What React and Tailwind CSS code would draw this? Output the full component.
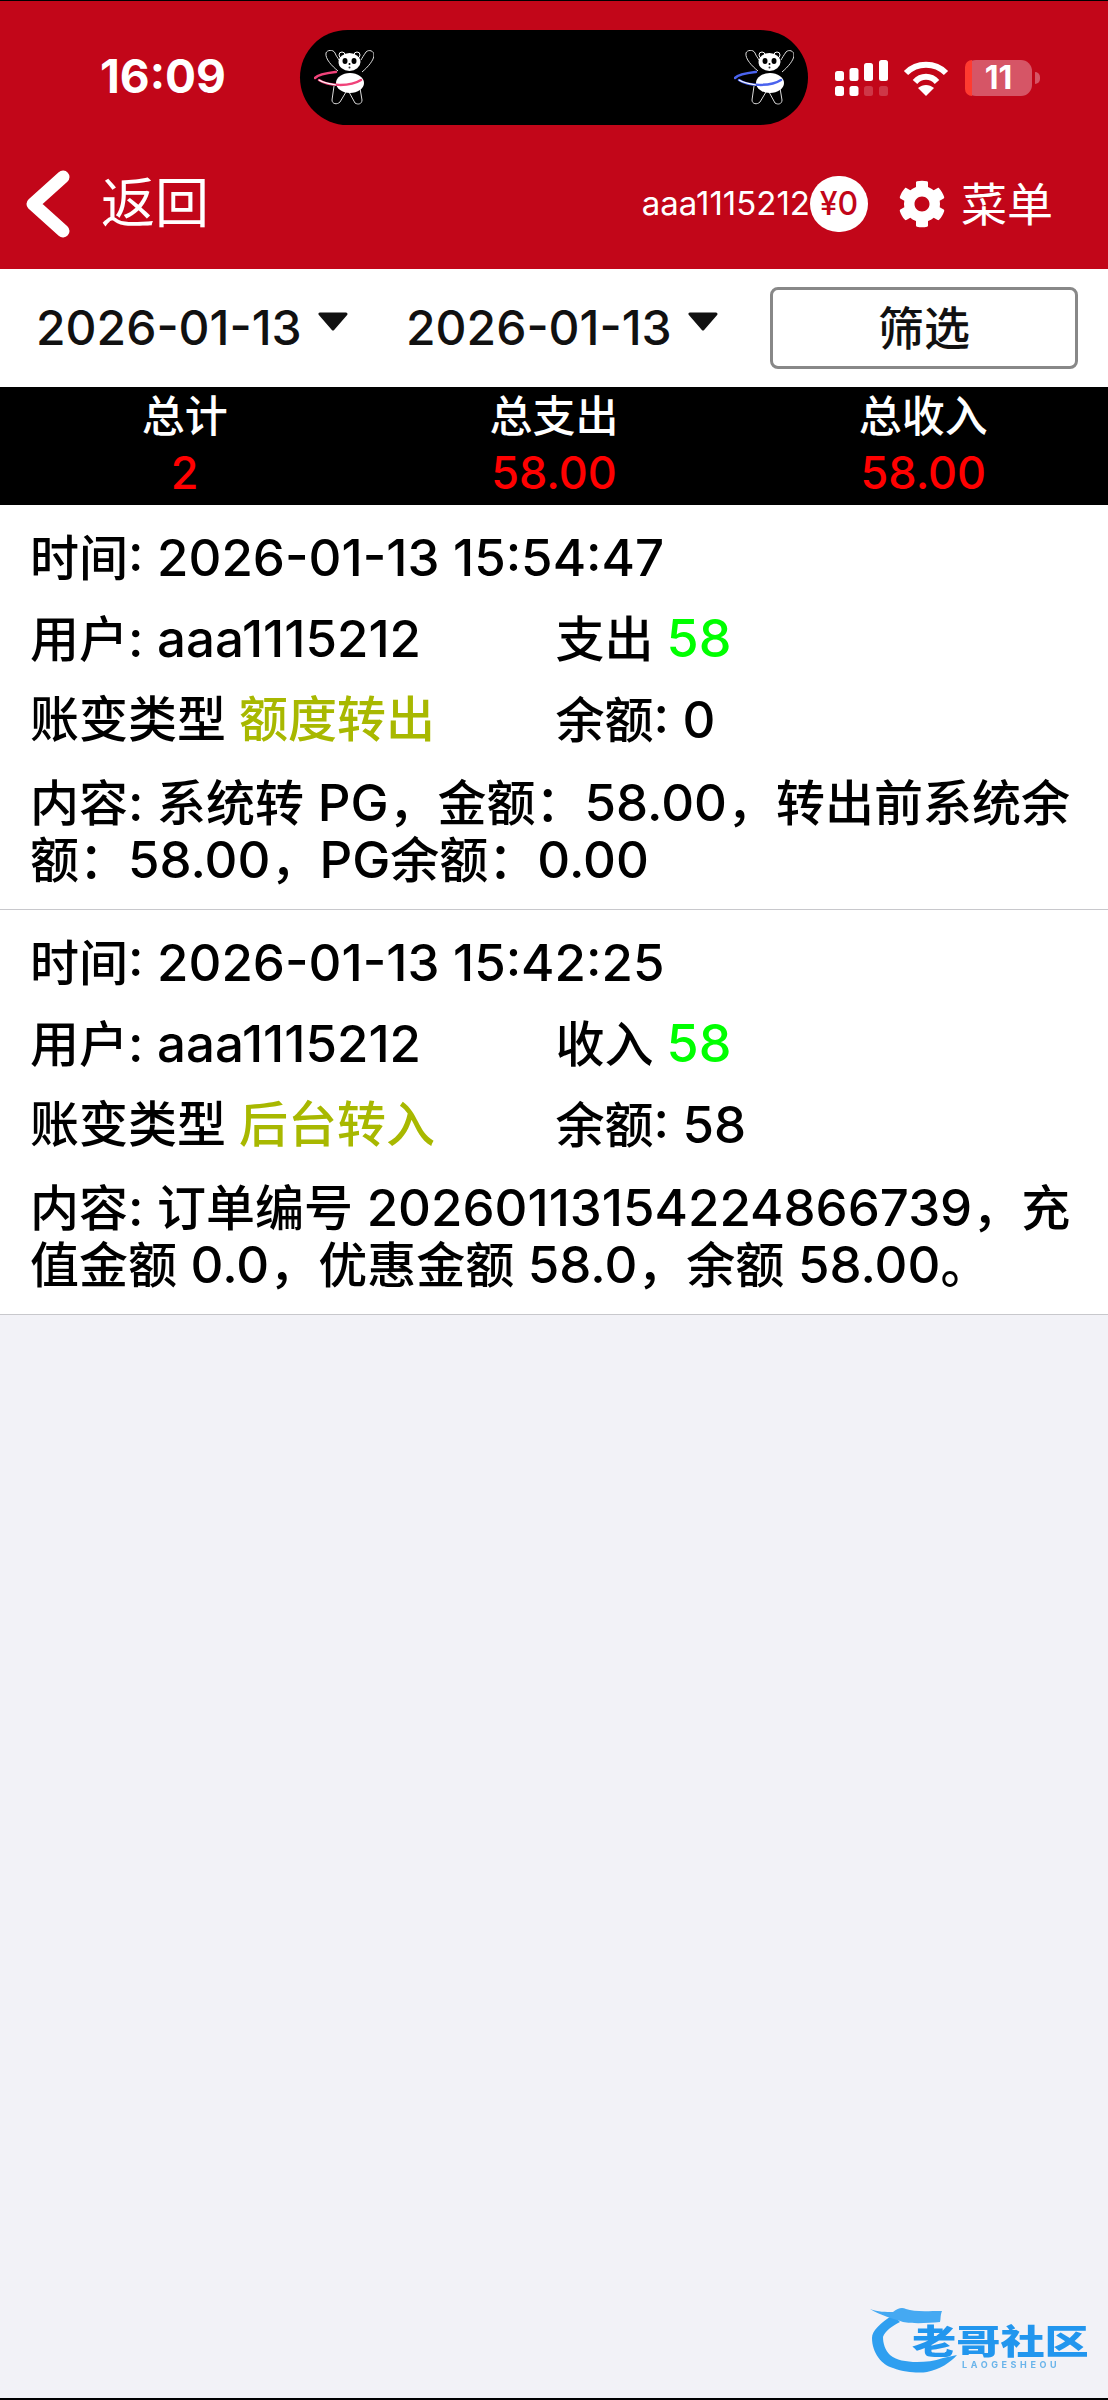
import React from 'react';
import { FaCog } from 'react-icons/fa';

const records = [
  {
    time: '2026-01-13 15:54:47',
    user: 'aaa1115212',
    flowLabel: '支出',
    amount: '58',
    type: '额度转出',
    balance: '0',
    content: ['内容: 系统转 PG，金额：58.00，转出前系统余', '额：58.00，PG余额：0.00'],
  },
  {
    time: '2026-01-13 15:42:25',
    user: 'aaa1115212',
    flowLabel: '收入',
    amount: '58',
    type: '后台转入',
    balance: '58',
    content: ['内容: 订单编号 20260113154224866739，充', '值金额 0.0，优惠金额 58.0，余额 58.00。'],
  },
];

// digits and latin run a bit larger than the CJK text in the original
const Mixed = ({ text }) =>
  text.split(/([\x20-\x7e]+)/).map((part, i) =>
    i % 2 === 1 ? (
      <span key={i} className="text-[51px]">{part}</span>
    ) : (
      part
    )
  );

const Panda = ({ hoop }) => (
  <svg width="60" height="56" viewBox="0 0 60 56" fill="none">
    <path d="M24 21C18 16 11 9 12 3C13 0 19 -1 21 3C22 6 24 8 25 10" stroke="#ddd" strokeWidth="1" />
    <path d="M48 22C54 17 60 10 60 5C60 1 55 -1 52 2C50 5 48 8 47 10" stroke="#ddd" strokeWidth="1" />
    <path d="M20 36L18 50C18 54 23 55 26 52L32 42" stroke="#ddd" strokeWidth="1" />
    <path d="M35 42L41 53C44 55 48 54 48 50L46 38" stroke="#ddd" strokeWidth="1" />
    <circle cx="28" cy="5" r="3" fill="#000" stroke="#fff" strokeWidth="1" />
    <circle cx="43" cy="5" r="3" fill="#000" stroke="#fff" strokeWidth="1" />
    <ellipse cx="35.5" cy="12" rx="11" ry="9" fill="#fff" />
    <ellipse cx="31" cy="11" rx="2.5" ry="3" fill="#000" />
    <ellipse cx="40" cy="11" rx="2.5" ry="3" fill="#000" />
    <circle cx="35.5" cy="14" r="1" fill="#000" />
    <circle cx="35.5" cy="17.5" r="1" fill="#333" />
    <ellipse cx="36" cy="33" rx="14" ry="10" fill="#fff" />
    <path d="M1 28C5 24 14 23 22 22" stroke={hoop} strokeWidth="2.5" strokeLinecap="round" />
    <path d="M5 30C14 36 36 37 47 30" stroke={hoop} strokeWidth="2.5" strokeLinecap="round" />
    <path d="M5 30C10 33 16 34 22 35" stroke="#fff" strokeWidth="1.2" />
  </svg>
);

const SignalIcon = () => (
  <svg width="53" height="36" viewBox="0 0 53 36" fill="#fff">
    <rect x="0" y="11" width="9" height="10" rx="2.5" />
    <rect x="14.5" y="8" width="9" height="13" rx="2.5" />
    <rect x="29" y="3" width="9" height="18" rx="2.5" />
    <rect x="44" y="0" width="9" height="21" rx="2.5" />
    <rect x="0" y="26" width="9" height="10" rx="2.5" />
    <rect x="14.5" y="26" width="9" height="10" rx="2.5" />
    <rect x="29" y="26" width="9" height="10" rx="2.5" opacity="0.2" />
    <rect x="44" y="26" width="9" height="10" rx="2.5" opacity="0.2" />
  </svg>
);

const WifiIcon = () => (
  <svg width="46" height="36" viewBox="0 0 46 36" fill="none" stroke="#fff" strokeWidth="6">
    <path d="M3 13C14 2 32 2 43 13" />
    <path d="M12 22C18 15 28 15 34 22" />
    <path d="M23 36L15 28C20 24 26 24 31 28Z" fill="#fff" stroke="none" />
  </svg>
);

const Battery = () => (
  <div className="flex items-center gap-[3px]">
    <div className="w-[67px] h-[36px] rounded-[11px] bg-[#d65566] flex items-center">
      <div className="w-[7px] h-full rounded-l-[11px] bg-[#ff3b30]" />
      <span className="w-[53px] text-center text-[32px] leading-none font-bold text-white">11</span>
    </div>
    <div className="w-[5px] h-[12px] rounded-r-full bg-[#d65566]" />
  </div>
);

const CaretDown = () => (
  <svg width="32" height="19" viewBox="0 0 32 19" className="ml-[15px] mt-[-14px]">
    <path d="M3 2H29L16 17Z" fill="#111" stroke="#111" strokeWidth="3" strokeLinejoin="round" />
  </svg>
);

const DateSelect = ({ value, className }) => (
  <div className={`flex items-center ${className}`}>
    <span className="text-[48px] leading-none font-medium text-[#111]">{value}</span>
    <CaretDown />
  </div>
);

const Stat = ({ label, value }) => (
  <div className="flex flex-col items-center pt-[2px] font-medium">
    <span className="text-[43px] leading-[55px] text-white">{label}</span>
    <span className="text-[45px] leading-[57px] text-[#ff0000]">{value}</span>
  </div>
);

const RecordRow = ({ record }) => (
  <div className="bg-white border-b border-[#c8c8cc] pl-[30px] pr-[31px] pt-[12px] pb-[21px] text-[49px] font-medium text-black">
    <div className="h-[81px] leading-[81px]">
      <Mixed text={`时间: ${record.time}`} />
    </div>
    <div className="grid grid-cols-2 h-[81px] leading-[81px]">
      <div>
        <Mixed text={`用户: ${record.user}`} />
      </div>
      <div className="pl-[2px]">
        {record.flowLabel} <span className="text-[52px] text-[#00ff00]">{record.amount}</span>
      </div>
    </div>
    <div className="grid grid-cols-2 h-[81px] leading-[81px]">
      <div>
        账变类型 <span className="text-[#a8b800]">{record.type}</span>
      </div>
      <div className="pl-[2px]">
        <Mixed text={`余额: ${record.balance}`} />
      </div>
    </div>
    <div className="pt-[14px]">
      {record.content.map((line) => (
        <div key={line} className="h-[57px] leading-[57px] whitespace-nowrap">
          <Mixed text={line} />
        </div>
      ))}
    </div>
  </div>
);

const Watermark = () => (
  <div className="absolute left-[870px] top-[2303px] w-[222px] h-[70px] blur-[0.7px]">
    <svg width="100" height="72" viewBox="0 0 100 72" className="absolute left-0 top-0">
      <path d="M23 12C10 20 2 28 2 35C2 50 12 62 23 65C36 70 50 70 57 69C70 66 80 60 87 52L73 55C64 58 56 59 47 59C36 59 26 57 20 52C15 47 13 40 13 34C15 28 22 23 30 19Z" fill="#2f9ff0" />
      <path d="M0 6C8 9 16 9 23 9C28 5 32 4 36 6C44 9 56 8 72 8C70 13 71 16 70 19C58 20 44 21 33 19C24 16 10 12 0 6Z" fill="#45a9f2" />
    </svg>
    <span className="absolute left-[42px] top-[22px] origin-left scale-x-[1.3] text-[34px] leading-none font-black text-[#2296ee] whitespace-nowrap">老哥社区</span>
    <span className="absolute left-[92px] top-[57px] text-[9px] leading-none font-bold tracking-[3.6px] text-[#6ab4ea] whitespace-nowrap">LAOGESHEOU</span>
  </div>
);

export default function App() {
  return (
    <div className="relative w-[1108px] h-[2400px] bg-[#f2f2f7] border-b-2 border-black overflow-hidden [font-family:Inter,'Noto_Sans_CJK_SC',sans-serif]">
      <header className="h-[269px] bg-[#c20619] border-t border-black">
        {/* status bar */}
        <div className="flex items-center pt-[28px] h-[125px]">
          <span className="w-[300px] pl-[100px] mt-[-4px] text-[46px] leading-none font-bold text-white">16:09</span>
          <div className="w-[508px] h-[95px] rounded-full bg-black flex items-center justify-between pl-[14px] pr-[14px]">
            <Panda hoop="#f0437a" />
            <Panda hoop="#4a63ee" />
          </div>
          <div className="flex items-center pl-[27px]">
            <SignalIcon />
            <div className="ml-[15px]">
              <WifiIcon />
            </div>
            <div className="ml-[16px]">
              <Battery />
            </div>
          </div>
        </div>
        {/* nav bar */}
        <div className="flex items-center h-[143px] pt-[12px] text-white">
          <svg width="46" height="70" viewBox="0 0 46 70" className="ml-[25px]" fill="none">
            <path d="M38 8L8 35L38 62" stroke="#fff" strokeWidth="13" strokeLinecap="round" strokeLinejoin="round" />
          </svg>
          <span className="ml-[30px] text-[54px] leading-none">返回</span>
          <div className="ml-auto flex items-center">
            <span className="text-[33px] leading-none">aaa1115212</span>
            <span className="w-[58px] h-[56px] rounded-full bg-white text-[#c20619] text-[32px] font-medium flex items-center justify-center">¥0</span>
          </div>
          <FaCog className="ml-[30px] w-[48px] h-[48px] blur-[0.5px]" />
          <span className="ml-[15px] mr-[55px] text-[46px] leading-none">菜单</span>
        </div>
      </header>

      <div className="h-[118px] bg-white flex items-center">
        <DateSelect value="2026-01-13" className="pl-[36px] w-[406px]" />
        <DateSelect value="2026-01-13" className="w-[364px]" />
        <button className="w-[308px] h-[82px] rounded-[8px] border-[3px] border-[#888] bg-white text-[46px] font-medium text-[#111]">筛选</button>
      </div>

      <div className="h-[118px] bg-black grid grid-cols-3">
        <Stat label="总计" value="2" />
        <Stat label="总支出" value="58.00" />
        <Stat label="总收入" value="58.00" />
      </div>

      {records.map((record) => (
        <RecordRow key={record.time} record={record} />
      ))}

      <Watermark />
    </div>
  );
}
